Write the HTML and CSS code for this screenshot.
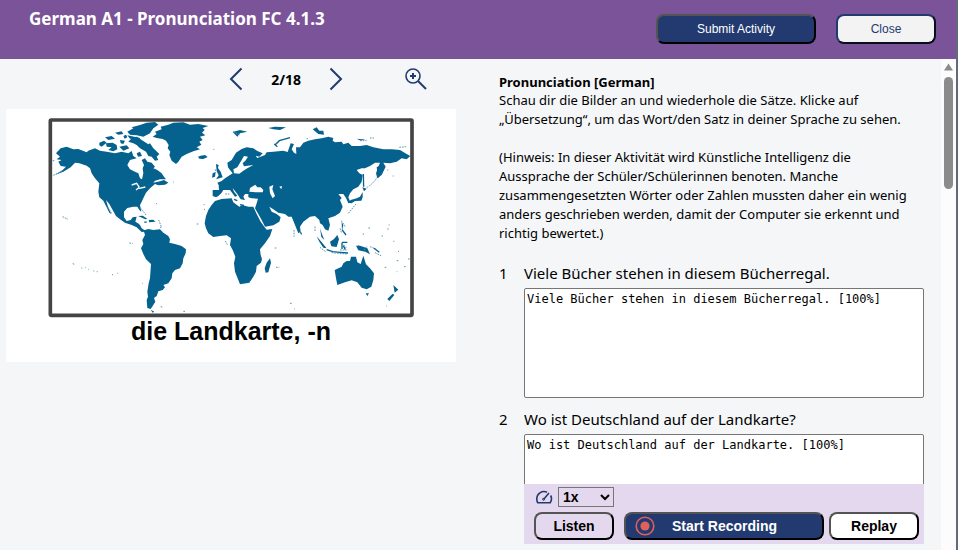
FILE: index.html
```html
<!DOCTYPE html>
<html lang="de">
<head>
<meta charset="utf-8">
<meta name="viewport" content="width=device-width, initial-scale=1">
<title>German A1 - Pronunciation FC 4.1.3</title>
<link rel="stylesheet" href="styles.css">
</head>
<body>
<header class="topbar">
  <h1 class="topbar-title">German A1 - Pronunciation FC 4.1.3</h1>
  <div class="topbar-actions">
    <button type="button" class="btn btn-submit">Submit Activity</button>
    <button type="button" class="btn btn-close">Close</button>
  </div>
</header>
<main class="content">
  <section class="viewer">
    <nav class="pager" aria-label="Cards">
      <button type="button" class="icon-btn" aria-label="Previous">
        <svg width="14" height="24" viewBox="0 0 14 24"><path d="M12.500 1.500 2 12l10.500 10.500"/></svg>
      </button>
      <span class="pager-count">2/18</span>
      <button type="button" class="icon-btn" aria-label="Next">
        <svg width="14" height="24" viewBox="0 0 14 24"><path d="M1.500 1.500 12 12 1.500 22.500"/></svg>
      </button>
      <button type="button" class="icon-btn zoom-btn" aria-label="Zoom in">
        <svg width="22" height="22" viewBox="0 0 22 22"><circle cx="8" cy="8" r="7" stroke-width="1.600"/><path d="M13 13l8 8"/><path d="M8 5v6M5 8h6"/></svg>
      </button>
    </nav>
    <figure class="card">
      <svg class="map" viewBox="-102 -3 1350 633" role="img" aria-label="Weltkarte">
        <rect class="frame" x="31" y="30" width="1085" height="586" rx="3"/>
        <g class="land">
          <!-- North America -->
          <path d="M52 125 62 115 80 110 100 118 115 117 140 127 145 122 165 115 180 122 200 125 225 130 245 125 265 130 275 123 280 138 290 145 270 150 262 165 270 178 285 185 295 190 300 205 306 208 310 190 308 175 312 165 305 150 315 145 322 155 335 158 345 170 340 175 352 180 365 190 372 200 378 208 360 208 345 212 340 218 360 214 372 210 385 218 375 224 355 226 345 222 330 235 318 248 312 260 305 275 300 285 304 305 298 300 292 290 280 290 262 294 252 305 252 322 260 333 272 330 278 322 290 320 286 335 294 340 300 345 305 355 318 364 305 366 290 352 275 345 255 338 240 328 228 318 218 300 208 282 198 270 204 290 214 312 208 308 198 288 190 272 178 262 175 245 178 220 165 205 155 190 150 175 140 167 118 160 105 158 92 172 70 185 45 195 68 180 78 170 62 168 55 155 65 150 50 148 60 140 48 130Z"/>
          <path d="M262 65 280 55 275 52 300 45 320 38 345 36 355 44 340 55 330 70 310 80 290 76 270 74Z"/>
          <path d="M290 80 305 90 325 103 330 100 340 115 358 132 350 140 355 150 345 152 335 140 325 138 318 125 300 115 290 105 280 100 265 95 275 85Z"/>
          <path d="M198 100 218 98 230 105 232 118 220 124 205 120 215 112 200 110ZM178 98 192 92 200 98 185 110 178 106ZM195 82 215 78 225 86 205 90ZM240 90 255 92 250 102 242 100ZM238 110 260 106 268 115 250 122ZM262 76 300 84 300 90 270 86ZM290 130 300 125 306 138 294 140ZM225 68 245 64 250 72 235 74ZM250 78 258 74 262 82 254 86Z"/>
          <!-- Greenland and Iceland -->
          <path d="M338 80 350 72 345 65 365 58 362 50 385 44 400 38 430 37 450 44 475 42 505 48 488 54 494 60 486 68 496 76 480 80 488 90 478 95 484 104 470 112 480 118 460 124 440 132 425 140 415 155 408 162 395 152 388 135 391 125 383 115 386 105 378 92 368 87 350 84ZM474 140 482 137 495 135 503 141 490 147 478 146Z"/>
          <!-- Caribbean -->
          <path d="M294 318 308 317 322 326 316 328ZM326 330 340 329 346 335 328 337ZM312 335 320 334 320 338 313 338Z"/>
          <!-- South America -->
          <path d="M304 362 313 361 325 357 340 360 360 358 370 368 385 378 390 388 388 398 405 402 425 408 438 418 437 430 430 445 428 460 420 475 405 480 397 490 395 505 385 520 370 525 375 532 368 540 355 544 350 558 342 564 346 575 338 588 332 597 322 594 320 570 324 560 322 545 326 520 330 505 333 462 318 448 310 432 303 415 310 402 307 390 315 375 312 365ZM332 599 343 605 338 608Z"/>
          <!-- Africa -->
          <path d="M525 273 545 267 575 265 580 277 598 290 606 285 625 290 640 290 650 312 662 335 674 352 680 359 697 357 690 378 675 400 660 418 662 435 666 447 663 458 650 468 648 485 640 500 628 518 600 523 595 510 585 485 582 460 586 440 578 420 570 405 573 385 560 376 540 378 520 381 505 370 498 355 494 340 498 318 505 300 515 285ZM690 445 693 458 685 487 677 488 674 475 680 458Z"/>
          <!-- British Isles -->
          <path d="M528 162 536 165 534 174 542 185 548 202 528 208 536 196 530 184ZM518 190 527 186 525 200 516 203Z"/>
        </g>
        <g class="land" transform="translate(540)">
          <!-- Eurasia -->
          <path d="M-22 240-3 240-4 225-8 218 5 213 15 205 30 195 38 190 30 180 24 172 22 158 35 150 48 128 65 117 80 112 100 115 112 123 128 130 118 140 107 137 112 144 135 135 140 127 160 125 190 122 203 126 212 100 222 102 215 118 222 128 229 132 228 112 240 112 250 98 265 92 285 88 305 85 325 80 340 84 338 92 345 97 365 95 370 103 385 98 395 108 420 108 440 105 460 112 490 118 515 118 540 120 560 132 571 138 560 148 545 145 530 155 510 160 490 158 497 170 485 195 472 205 468 190 475 170 480 158 465 158 450 168 435 175 425 175 410 180 418 190 428 195 425 215 415 230 400 238 390 250 385 262 392 278 385 280 378 264 370 252 355 252 365 264 360 270 368 290 360 308 345 318 325 325 330 345 325 362 315 358 308 345 300 340 298 330 285 318 270 320 250 335 240 350 242 365 235 370 225 345 215 320 205 320 195 312 175 308 160 298 148 290 155 305 170 312 182 322 178 335 160 346 135 350 125 330 105 295 110 280 114 266 95 265 85 262 85 252 75 252 70 260 75 270 62 268 52 252 38 234 42 245 52 257 45 260 30 240 10 240 5 248-5 258-12 262-22 258Z"/>
          <path d="M470 172 484 164 488 182 475 205Z"/>
          <path class="water" d="M42 190 40 178 52 172 65 150 72 138 84 140 76 152 68 160 72 169 100 165 82 175 70 182 58 191ZM88 245 90 234 106 224 112 232 122 232 130 240 128 247 108 247ZM148 230 160 225 157 238 165 258 158 265 150 250ZM178 230 186 228 184 238Z"/>
          <path d="M385 278 392 270 410 265 420 260 428 246 428 262 424 272 405 273 395 280ZM427 232 440 236 432 244ZM38 66 60 60 82 65 60 70 52 80ZM145 54 165 50 198 52 180 60 160 58ZM278 58 290 52 298 62 310 62 312 74 295 72ZM410 86 425 88 436 88 422 92ZM365 335 370 345 366 362Z"/>
          <path class="line" d="M165 105 178 92 210 83M163 102 172 110M430 192 431 230M60 284 72 286M42 268 52 272"/>
        </g>
        <g class="land" transform="translate(540 345)">
          <!-- Australia and Oceania -->
          <path d="M344 135 365 125 370 115 380 108 390 108 393 95 408 95 412 112 422 117 430 92 438 118 450 130 462 145 460 165 454 185 440 193 425 188 412 172 395 166 375 172 352 180 348 160ZM437 205 447 205 442 213ZM520 180 535 194 524 203ZM518 206 523 210 508 228 502 222ZM290 34 304 50 320 70 310 68 298 50ZM330 50 342 42 352 30 357 43 350 66 334 64ZM408 62 420 62 442 70 450 88 436 80 415 76ZM238 19 246 24 244 31ZM300 10 306 28 313 44 304 36Z"/>
          <path class="line" d="M320 74 338 80 360 82 384 84M366 52 382 52M366 54 366 72M370 62 376 74M366 14 378 30M462 70 478 82"/>
        </g>
        <g class="islets">
          <path d="M40 196 65 184M38 152h5M68 320 84 328M98 461l6 2M124 474h3M136 472h2M144 478h2M160 483h3M170 485h3M216 494h3M231 490h2M306 520h2M268 399l10 1M362 590l8 2M430 604h6M348 281h3M491 284h3M492 298h3M470 342h8M356 330 364 350M360 352h4M300 292 318 315M400 216h2M520 118h3M580 65 600 75M556 252h12M526 178v10M204 292 216 312"/>
          <path d="M980 233Q1005 216 1010 203M925 310 948 282M904 332 916 350M750 580h5M762 597h2M704 414h8M708 472h10M762 360v20M825 350v15M900 355 905 370M990 410 1010 418M1005 428 1025 438M1025 378h4M1060 394h3M1074 424h3M1034 472h6M1070 452h6M1092 470h6M1104 447h8M1038 588h2M1046 345h3M1042 357h4M968 372h4M985 354h5M1025 190h3M1058 198h3M1042 180h3M1078 112 1098 110M840 412 858 426M900 420h20M875 428 920 432M905 398 920 415M953 408 960 405M972 420 980 410M800 86h4M960 92h20M990 84h12M1070 485h2M556 393 562 404"/>
        </g>
        <path class="sound" d="M275 225 290 220 298 232M288 240l10-8M298 235l18-4"/>
      </svg>
      <figcaption class="card-caption">die Landkarte, -n</figcaption>
    </figure>
  </section>
  <section class="activity">
    <h2 class="activity-title">Pronunciation [German]</h2>
    <p class="intro">Schau dir die Bilder an und wiederhole die Sätze. Klicke auf<br>„Übersetzung“, um das Wort/den Satz in deiner Sprache zu sehen.</p>
    <p class="intro">(Hinweis: In dieser Aktivität wird Künstliche Intelligenz die<br>Aussprache der Schüler/Schülerinnen benoten. Manche<br>zusammengesetzten Wörter oder Zahlen mussten daher ein wenig<br>anders geschrieben werden, damit der Computer sie erkennt und<br>richtig bewertet.)</p>
    <ol class="tasks">
      <li class="task">
        <span class="task-no">1</span>
        <label class="task-label" for="answer1">Viele Bücher stehen in diesem Bücherregal.</label>
        <div class="answer"><textarea id="answer1">Viele Bücher stehen in diesem Bücherregal. [100%]</textarea></div>
      </li>
      <li class="task">
        <span class="task-no">2</span>
        <label class="task-label" for="answer2">Wo ist Deutschland auf der Landkarte?</label>
        <div class="answer">
          <textarea id="answer2">Wo ist Deutschland auf der Landkarte. [100%]</textarea>
          <div class="recorder">
            <div class="speed">
              <svg class="gauge" width="18" height="14" viewBox="0 0 18 14" aria-hidden="true"><path stroke-width="1.600" d="M12 2.200C7 .2 1.500 3.500 1.800 9.500Q1.900 11.500 2.800 12.700H15.200Q17.600 9 15.600 5.500M8.500 9.500 14 3"/><circle cx="8.500" cy="9.300" r="1"/></svg>
              <select aria-label="Speed"><option>1x</option></select>
            </div>
            <div class="recorder-actions">
              <button type="button" class="btn btn-listen">Listen</button>
              <button type="button" class="btn btn-record">
                <svg width="20" height="20" viewBox="0 0 20 20" aria-hidden="true"><circle class="ring" cx="10" cy="10" r="8.800" stroke-width="1.600"/><circle class="dot" cx="10" cy="10" r="4.600"/></svg>
                <span class="record-text">Start Recording</span>
              </button>
              <button type="button" class="btn btn-replay">Replay</button>
            </div>
          </div>
        </div>
      </li>
    </ol>
  </section>
  <div class="scrollbar" aria-hidden="true">
    <svg width="9" height="8" viewBox="0 0 9 8"><path d="M4.500 0.500 9 7.500H0Z"/></svg>
    <div class="thumb"></div>
  </div>
</main>
</body>
</html>
```
FILE: styles.css
```css
* {
  box-sizing: border-box;
}

body {
  margin: 0;
  min-height: 100vh;
  display: flex;
  flex-direction: column;
  border-right: 2px solid #5f6b7b;
  background: #f4f6f8;
  color: #000;
  font-family: "Segoe UI", "Noto Sans", sans-serif;
  font-size: 13px;
}

.topbar {
  display: flex;
  justify-content: space-between;
  align-items: flex-start;
  min-height: 59px;
  padding: 0 20px 0 29px;
  background: #7b5398;
}

.topbar-title {
  margin: 8px 0 0;
  color: #fff;
  font-size: 17px;
  line-height: 22px;
}

.topbar-actions {
  display: flex;
  gap: 20px;
  padding-top: 14px;
}

.btn {
  height: 30px;
  padding: 0;
  border: 2px outset #000;
  border-radius: 8px;
  font: 12px "Liberation Sans", Arial, sans-serif;
}

.btn-submit {
  width: 160px;
  background: #223a70;
  color: #fff;
}

.btn-close {
  width: 100px;
  border-color: #223a70;
  background: #f3f3f3;
  color: #223a70;
}

.content {
  flex: 1;
  display: grid;
  grid-template-columns: minmax(0, 499fr) minmax(0, 442fr) 15px;
}

.pager {
  display: flex;
  align-items: center;
  justify-content: flex-end;
  gap: 28px;
  height: 50px;
  padding: 0 72px 10px 0;
}

.icon-btn {
  display: flex;
  padding: 0;
  border: 0;
  background: none;
}

.icon-btn svg {
  fill: none;
  stroke: #223a70;
  stroke-width: 2;
}

.zoom-btn {
  margin-left: 34px;
}

.pager-count {
  font-size: 14px;
  font-weight: 700;
}

.card {
  margin: 0 43px 0 6px;
  background: #fff;
}

.map {
  display: block;
  width: 100%;
}

.frame {
  fill: #fff;
  stroke: #444;
  stroke-width: 11;
}

.land {
  fill: #05628e;
}

.land .water {
  fill: #fff;
}

.land .line {
  fill: none;
  stroke: #05628e;
  stroke-width: 4;
}

.islets {
  fill: none;
  stroke: #5b98b5;
  stroke-width: 3;
  stroke-dasharray: 5 3;
}

.sound {
  fill: none;
  stroke: #fff;
  stroke-width: 4;
}

.card-caption {
  padding-bottom: 20px;
  text-align: center;
  font: bold 25px/22px "Liberation Sans", Arial, sans-serif;
}

.activity {
  padding: 14px 17px 6px 0;
}

.activity-title {
  margin: 0;
  font-size: 13px;
  line-height: 18px;
}

.intro {
  margin: 0 0 19px;
  line-height: 19px;
}

.tasks {
  margin: 0;
  padding: 0;
  list-style: none;
  display: grid;
  gap: 10px;
}

.task {
  display: grid;
  grid-template-columns: 25px minmax(0, 1fr);
  row-gap: 4px;
  font-size: 15px;
  line-height: 22px;
}

.answer {
  position: relative;
  grid-column: 2;
}

.answer textarea {
  display: block;
  width: 100%;
  height: 110px;
  padding: 2px;
  border: 1px solid #767676;
  border-radius: 2px;
  background: #fff;
  color: #000;
  font: 12px/16px Consolas, "DejaVu Sans Mono", monospace;
  resize: none;
}

.recorder {
  position: absolute;
  right: 0;
  bottom: 0;
  left: 0;
  height: 60px;
  padding: 2px 5px 4px 10px;
  background: #e4d8ee;
}

.speed {
  display: flex;
  align-items: center;
  gap: 5px;
  height: 21px;
  padding-left: 1px;
}

.gauge {
  fill: none;
  stroke: #223a70;
}

.speed select {
  width: 56px;
  height: 20px;
  padding: 0;
  border: 1px solid #767676;
  border-radius: 0;
  background: #e4d8ee;
  color: #000;
  font: bold 14px "Liberation Sans", Arial, sans-serif;
}

.recorder-actions {
  display: flex;
  margin-top: 5px;
}

.recorder-actions .btn {
  height: 28px;
  font-size: 14px;
  font-weight: 700;
}

.recorder-actions .btn-listen {
  width: 80px;
  margin-right: 10px;
  background: #e4d8ee;
  color: #000;
}

.recorder-actions .btn-record {
  flex: 1;
  display: flex;
  align-items: center;
  padding-left: 9px;
  margin-right: 5px;
  background: #223a70;
  color: #fff;
}

.record-text {
  flex: 1;
  padding-right: 28px;
}

.btn-record .ring {
  fill: none;
  stroke: #e0605a;
}

.btn-record .dot {
  fill: #e0605a;
}

.recorder-actions .btn-replay {
  width: 90px;
  background: #fff;
  color: #000;
}

.scrollbar {
  display: flex;
  flex-direction: column;
  align-items: center;
  gap: 6px;
  padding-top: 4px;
  background: #fcfcfc;
  fill: #8b8b8b;
}

.thumb {
  width: 9px;
  height: 112px;
  border-radius: 5px;
  background: #8b8b8b;
}
```
